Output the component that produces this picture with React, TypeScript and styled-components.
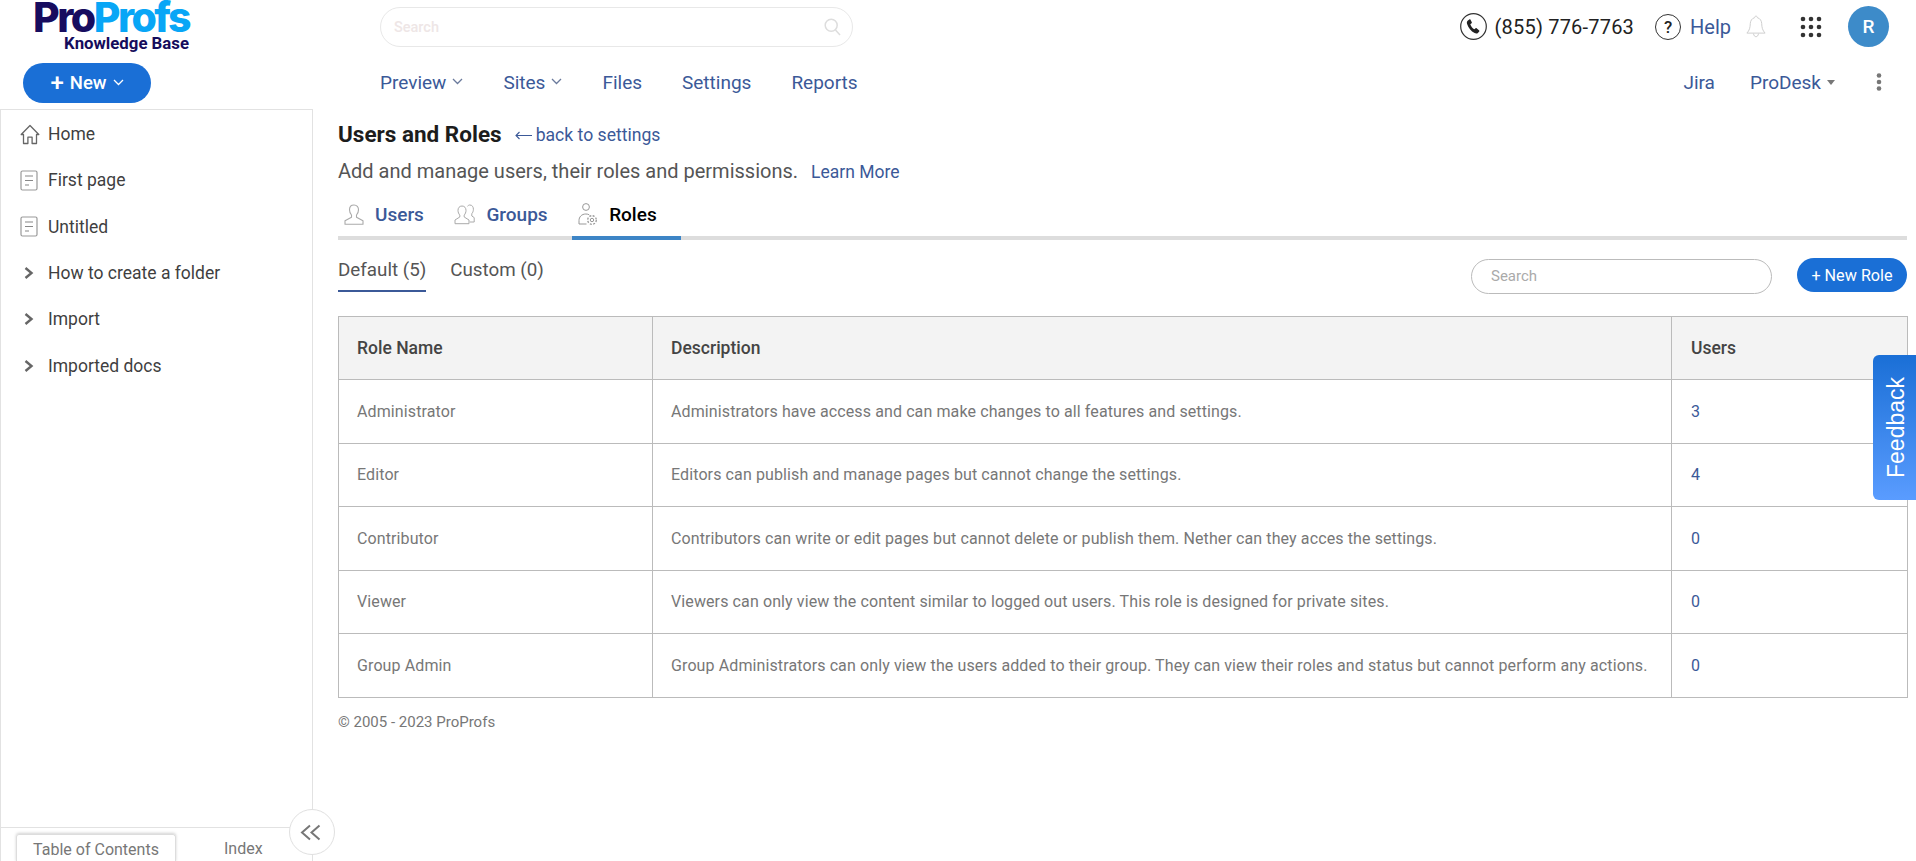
import React from "react";
import styled, { createGlobalStyle } from "styled-components";

const GlobalStyle = createGlobalStyle`
  html, body {
    margin: 0;
    padding: 0;
    background: #fff;
    font-family: Roboto, "Liberation Sans", Arial, sans-serif;
    overflow: hidden;
  }
  * { box-sizing: border-box; }
`;

const NAVY = "#3b5998";

const ROLES = [
  { name: "Administrator", description: "Administrators have access and can make changes to all features and settings.", users: 3 },
  { name: "Editor", description: "Editors can publish and manage pages but cannot change the settings.", users: 4 },
  { name: "Contributor", description: "Contributors can write or edit pages but cannot delete or publish them. Nether can they acces the settings.", users: 0 },
  { name: "Viewer", description: "Viewers can only view the content similar to logged out users. This role is designed for private sites.", users: 0 },
  { name: "Group Admin", description: "Group Administrators can only view the users added to their group. They can view their roles and status but cannot perform any actions.", users: 0 },
];

const TREE = [
  { label: "Home", kind: "home" },
  { label: "First page", kind: "page" },
  { label: "Untitled", kind: "page" },
  { label: "How to create a folder", kind: "folder" },
  { label: "Import", kind: "folder" },
  { label: "Imported docs", kind: "folder" },
];

const HomeIcon = () => (
  <svg width="20" height="21" viewBox="0 0 20 21" fill="none" stroke="#666" strokeWidth="1.3" strokeLinejoin="round">
    <path d="M10 1.5 1.2 10.5h2.3v9h4.4v-6.3h4.2v6.3h4.4v-9h2.3z" />
  </svg>
);

const PageIcon = () => (
  <svg width="18" height="21" viewBox="0 0 18 21" fill="none" stroke="#999" strokeWidth="1.2">
    <rect x="1" y="1" width="16" height="19" rx="1.5" />
    <path d="M5 6h8M5 10.5h8M5 15h4" stroke="#888" />
  </svg>
);

const FolderChevron = () => (
  <svg width="12" height="14" viewBox="0 0 12 14" fill="none" stroke="#666" strokeWidth="2.4">
    <path d="M2.500 2 8.500 7l-6 5" />
  </svg>
);

const Chevron = ({ color = "#6a7a9c", size = 11 }: { color?: string; size?: number }) => (
  <svg width={size} height={size * 0.64} viewBox="0 0 11 7" fill="none" stroke={color} strokeWidth="1.3">
    <path d="m1 1 4.500 4.500L10 1" />
  </svg>
);

const SearchGlyph = () => (
  <svg width="17" height="18" viewBox="0 0 17 18" fill="none" stroke="#ddd" strokeWidth="1.5">
    <circle cx="7.200" cy="7.200" r="6" />
    <path d="m11.500 12 4.500 5" />
  </svg>
);

const PhoneIcon = () => (
  <svg width="27" height="27" viewBox="0 0 27 27" fill="none">
    <circle cx="13.500" cy="13.500" r="12.800" stroke="#333" strokeWidth="1.200" />
    <path d="M9.300 6.400 7.600 7.700c-.8.700-.9 2-.5 3.300 1.200 3.800 4 7.300 7.500 9 1.200.6 2.500.6 3.300-.1l1.300-1.400c.3-.3.3-.8 0-1.100l-2.600-2.200c-.3-.3-.7-.2-1 0l-1.200 1.100c-1.900-1-3.400-3-4.100-5.100l1.300-1c.3-.3.4-.7.2-1L10.400 6.600c-.3-.4-.8-.5-1.100-.2z" fill="#222" />
  </svg>
);

const BellIcon = () => (
  <svg width="20" height="23" viewBox="0 0 20 23" fill="none" stroke="#cfcfcf" strokeWidth="1">
    <path d="M10 1.200c-.9 0-1.400.6-1.400 1.500C5.700 3.400 4.400 6 4.300 8.600c-.1 3.700-.8 6.900-3.400 9.500h18.200c-2.600-2.600-3.300-5.800-3.400-9.500-.1-2.600-1.400-5.200-4.300-5.900 0-.9-.5-1.500-1.400-1.500z" />
    <path d="M7.500 18.600c.3 2.100 1.300 3.100 2.500 3.100s2.200-1 2.500-3.100" />
  </svg>
);

const GridIcon = () => (
  <svg width="22" height="22" viewBox="0 0 22 22" fill="#333">
    {[3, 11, 19].map((y) =>
      [3, 11, 19].map((x) => <circle key={`${x}-${y}`} cx={x} cy={y} r="2.300" />)
    )}
  </svg>
);

const MoreIcon = () => (
  <svg width="6" height="18" viewBox="0 0 6 18" fill="#777">
    <circle cx="3" cy="2.500" r="2.300" />
    <circle cx="3" cy="9" r="2.300" />
    <circle cx="3" cy="15.500" r="2.300" />
  </svg>
);

const UserIcon = () => (
  <svg width="20" height="21" viewBox="0 0 20 21" fill="none" stroke="#aaa" strokeWidth="1.100" strokeLinejoin="round">
    <path d="M10 1c-2.900 0-4.500 2.100-4.500 4.800 0 2.100.9 4 2 5.200v2.200L1 16.800v3.400h18v-3.400l-6.500-3.600V11c1.100-1.200 2-3.100 2-5.200C14.500 3.100 12.900 1 10 1z" />
  </svg>
);

const GroupIcon = () => (
  <svg width="21" height="21" viewBox="0 0 21 21" fill="none" stroke="#aaa" strokeWidth="1" strokeLinejoin="round">
    <path d="M13.500 2.200C14.500 1.300 15 1 15.800 1c2.400 0 3.600 1.900 3.600 4.300 0 1.800-.7 3.400-1.600 4.400V12l2.400 1.600v4.400h-4.400" />
    <path d="M8 2C5.400 2 4 4 4 6.400c0 1.900.8 3.600 1.800 4.700v1.900L1 16v3.700h14V16l-4.800-3v-1.900c1-1.100 1.800-2.800 1.800-4.700C12 4 10.600 2 8 2z" />
  </svg>
);

const RolesIcon = () => (
  <svg width="20" height="23" viewBox="0 0 20 23" fill="none" stroke="#999" strokeWidth="1">
    <circle cx="8" cy="4" r="3.400" />
    <path d="M1 21v-3.500c0-3.500 2.600-6.500 6.800-6.500 1.400 0 2.500.3 3.400.8M1 21h7.500" />
    <circle cx="14" cy="17" r="1.700" />
    <circle cx="14" cy="17" r="4.300" strokeDasharray="2 1.400" strokeWidth="1.300" />
  </svg>
);

const DoubleChevron = () => (
  <svg width="21" height="17" viewBox="0 0 21 17" fill="none" stroke="#777" strokeWidth="2">
    <path d="M10 1.500 2 8.500l8 7M19.500 1.500l-8 7 8 7" />
  </svg>
);

const BackArrowIcon = () => (
  <svg width="17" height="9" viewBox="0 0 17 9" fill="none" stroke={NAVY} strokeWidth="1.100">
    <path d="M17 4.500H1M4.500 1 1 4.500 4.500 8" />
  </svg>
);

export default function App() {
  return (
    <>
      <GlobalStyle />
      <Shell>
        <Header>
          <TopRow>
            <LogoSlot>
              <Logo>
                <LogoMark>
                  <LogoPro>Pro</LogoPro>
                  <LogoProfs>Profs</LogoProfs>
                </LogoMark>
                <LogoSub>Knowledge Base</LogoSub>
              </Logo>
            </LogoSlot>
            <GlobalSearch>
              <GlobalSearchText>Search</GlobalSearchText>
              <SearchGlyph />
            </GlobalSearch>
            <TopActions>
              <PhoneIcon />
              <PhoneNumber>(855) 776-7763</PhoneNumber>
              <HelpCircle>?</HelpCircle>
              <HelpLink>Help</HelpLink>
              <BellSlot>
                <BellIcon />
              </BellSlot>
              <GridSlot>
                <GridIcon />
              </GridSlot>
              <Avatar>R</Avatar>
            </TopActions>
          </TopRow>
          <NavRow>
            <NewSlot>
              <NewButton>
                <NewPlus>+</NewPlus>
                New
                <Chevron color="#fff" size={11} />
              </NewButton>
            </NewSlot>
            <Nav>
              <NavItem>
                Preview <Chevron />
              </NavItem>
              <NavItem>
                Sites <Chevron />
              </NavItem>
              <NavItem>Files</NavItem>
              <NavItem>Settings</NavItem>
              <NavItem>Reports</NavItem>
            </Nav>
            <NavRight>
              <NavItem>Jira</NavItem>
              <NavItem>
                ProDesk <Caret />
              </NavItem>
              <MoreSlot>
                <MoreIcon />
              </MoreSlot>
            </NavRight>
          </NavRow>
        </Header>
        <Body>
          <Sidebar>
            <Tree>
              {TREE.map((item) => (
                <TreeRow key={item.label}>
                  <TreeIcon $folder={item.kind === "folder"}>
                    {item.kind === "home" && <HomeIcon />}
                    {item.kind === "page" && <PageIcon />}
                    {item.kind === "folder" && <FolderChevron />}
                  </TreeIcon>
                  {item.label}
                </TreeRow>
              ))}
            </Tree>
            <SideFooter>
              <SideTab $active>Table of Contents</SideTab>
              <SideTab>Index</SideTab>
            </SideFooter>
            <Collapse>
              <DoubleChevron />
            </Collapse>
          </Sidebar>
          <Main>
            <TitleRow>
              <Title>Users and Roles</Title>
              <BackLink>
                <BackArrowIcon />
                back to settings
              </BackLink>
            </TitleRow>
            <SubtitleRow>
              <Subtitle>Add and manage users, their roles and permissions.</Subtitle>
              <LearnMore>Learn More</LearnMore>
            </SubtitleRow>
            <TabsBar>
              <MainTab>
                <UserIcon />
                Users
              </MainTab>
              <MainTab>
                <GroupIcon />
                Groups
              </MainTab>
              <MainTab $active>
                <RolesIcon />
                Roles
              </MainTab>
            </TabsBar>
            <FilterRow>
              <FilterTabs>
                <FilterTab $active>Default (5)</FilterTab>
                <FilterTab>Custom (0)</FilterTab>
              </FilterTabs>
              <FilterActions>
                <RoleSearch>Search</RoleSearch>
                <NewRole>+ New Role</NewRole>
              </FilterActions>
            </FilterRow>
            <RolesTable>
              <colgroup>
                <col width="314" />
                <col width="1019" />
                <col width="236" />
              </colgroup>
              <thead>
                <tr>
                  <Th>Role Name</Th>
                  <Th>Description</Th>
                  <Th>Users</Th>
                </tr>
              </thead>
              <tbody>
                {ROLES.map((role) => (
                  <tr key={role.name}>
                    <Td>{role.name}</Td>
                    <Td>{role.description}</Td>
                    <CountCell>{role.users}</CountCell>
                  </tr>
                ))}
              </tbody>
            </RolesTable>
            <Copyright>© 2005 - 2023 ProProfs</Copyright>
          </Main>
        </Body>
        <Feedback>Feedback</Feedback>
      </Shell>
    </>
  );
}

const Shell = styled.div`
  width: 1916px;
  height: 861px;
  display: flex;
  flex-direction: column;
  overflow: hidden;
  position: relative;
`;

const Header = styled.header`
  height: 109px;
  display: flex;
  flex-direction: column;
`;

const TopRow = styled.div`
  height: 54px;
  display: flex;
  align-items: flex-start;
`;

const LogoSlot = styled.div`
  width: 380px;
  padding-left: 35px;
`;

const Logo = styled.div`
  width: 154px;
  display: flex;
  flex-direction: column;
  align-items: flex-end;
`;

const LogoMark = styled.div`
  font-family: Inter, Roboto, sans-serif;
  font-weight: 800;
  font-size: 41px;
  line-height: 34px;
  letter-spacing: -2.500px;
  white-space: nowrap;
`;

const LogoPro = styled.span`
  color: #170c5f;
`;

const LogoProfs = styled.span`
  color: #08a6f6;
`;

const LogoSub = styled.div`
  color: #150c5c;
  font-weight: 700;
  font-size: 16.800px;
  line-height: 18px;
  white-space: nowrap;
`;

const GlobalSearch = styled.div`
  width: 473px;
  height: 40px;
  margin-top: 7px;
  padding: 0 11px 0 13px;
  border: 1px solid #e8e8e8;
  border-radius: 20px;
  display: flex;
  align-items: center;
  justify-content: space-between;
`;

const GlobalSearchText = styled.span`
  font-size: 14.500px;
  font-weight: 500;
  color: #eee6e6;
`;

const TopActions = styled.div`
  margin-left: auto;
  height: 41px;
  margin-top: 6px;
  padding-right: 27px;
  display: flex;
  align-items: center;
`;

const PhoneNumber = styled.span`
  margin-left: 8px;
  font-size: 20px;
  color: #222;
  letter-spacing: 0.2px;
`;

const HelpCircle = styled.span`
  margin-left: 21px;
  width: 26px;
  height: 26px;
  border: 1.500px solid #333;
  border-radius: 50%;
  display: flex;
  align-items: center;
  justify-content: center;
  font-size: 17px;
  font-weight: 500;
  color: #222;
`;

const HelpLink = styled.span`
  margin-left: 9px;
  font-size: 20px;
  color: ${NAVY};
`;

const BellSlot = styled.span`
  margin-left: 15px;
  display: flex;
`;

const GridSlot = styled.span`
  margin-left: 34px;
  display: flex;
`;

const Avatar = styled.span`
  margin-left: 26px;
  width: 41px;
  height: 41px;
  border-radius: 50%;
  background: #3d8bc9;
  color: #fff;
  display: flex;
  align-items: center;
  justify-content: center;
  font-size: 19px;
  font-weight: 500;
`;

const NavRow = styled.div`
  height: 55px;
  display: flex;
  align-items: flex-start;
`;

const NewSlot = styled.div`
  width: 380px;
  padding: 9px 0 0 23px;
`;

const NewButton = styled.button`
  width: 128px;
  height: 40px;
  border: 0;
  border-radius: 20px;
  background: #1a6fd6;
  color: #fff;
  font-family: inherit;
  font-size: 18.500px;
  font-weight: 500;
  display: flex;
  align-items: center;
  justify-content: center;
  gap: 6px;
`;

const NewPlus = styled.span`
  font-size: 24px;
  line-height: 24px;
`;

const Nav = styled.nav`
  height: 56px;
  display: flex;
  align-items: center;
  gap: 40px;
`;

const NavItem = styled.span`
  font-size: 19px;
  color: ${NAVY};
  display: flex;
  align-items: center;
  gap: 6px;
  white-space: nowrap;
`;

const NavRight = styled.div`
  margin-left: auto;
  height: 56px;
  padding-right: 34px;
  display: flex;
  align-items: center;
  gap: 35px;
`;

const Caret = styled.span`
  width: 0;
  height: 0;
  border-left: 4.500px solid transparent;
  border-right: 4.500px solid transparent;
  border-top: 5px solid #777;
`;

const MoreSlot = styled.span`
  margin-left: 6px;
  display: flex;
`;

const Body = styled.div`
  flex: 1;
  display: flex;
  min-height: 0;
`;

const Sidebar = styled.aside`
  position: relative;
  width: 313px;
  flex: none;
  border: 1px solid #e2e2e2;
  border-bottom: 0;
  display: flex;
  flex-direction: column;
`;

const Tree = styled.div`
  flex: 1;
  padding-top: 1px;
`;

const TreeRow = styled.div`
  height: 46.300px;
  display: flex;
  align-items: center;
  font-size: 17.500px;
  color: #3f3f3f;
`;

const TreeIcon = styled.span<{ $folder?: boolean }>`
  width: 47px;
  padding-left: ${(p) => (p.$folder ? "22px" : "19px")};
  display: flex;
  flex: none;
  align-items: center;
`;

const SideFooter = styled.div`
  height: 34px;
  border-top: 1px solid #e2e2e2;
  padding: 6px 0 0 15px;
  display: flex;
`;

const SideTab = styled.div<{ $active?: boolean }>`
  width: ${(p) => (p.$active ? "160px" : "auto")};
  margin-left: ${(p) => (p.$active ? "0" : "48px")};
  height: 28px;
  text-align: center;
  font-size: 16px;
  line-height: 30px;
  color: #777;
  border-radius: 3px 3px 0 0;
  ${(p) => p.$active && "border: 1px solid #ddd; border-bottom: 0; box-shadow: 0 -1px 3px rgba(0,0,0,.18);"}
`;

const Collapse = styled.div`
  position: absolute;
  right: -23px;
  bottom: 6px;
  width: 46px;
  height: 46px;
  padding-right: 3px;
  border: 1px solid #e0e0e0;
  border-radius: 50%;
  background: #fff;
  display: flex;
  align-items: center;
  justify-content: center;
`;

const Main = styled.main`
  flex: 1;
  min-width: 0;
  padding: 0 9px 0 25px;
`;

const TitleRow = styled.div`
  height: 50px;
  display: flex;
  align-items: center;
  gap: 13px;
`;

const Title = styled.h1`
  margin: 0;
  font-size: 22.500px;
  font-weight: 700;
  color: #1c1c1c;
`;

const BackLink = styled.a`
  padding-top: 2px;
  font-size: 17.600px;
  color: ${NAVY};
  display: flex;
  align-items: center;
  gap: 4px;
`;

const SubtitleRow = styled.div`
  height: 24px;
  display: flex;
  align-items: center;
  gap: 13px;
`;

const Subtitle = styled.span`
  font-size: 20px;
  color: #555;
`;

const LearnMore = styled.a`
  font-size: 17.500px;
  color: ${NAVY};
  padding-top: 2px;
`;

const TabsBar = styled.div`
  height: 57px;
  padding-top: 7px;
  border-bottom: 4px solid #ddd;
  display: flex;
`;

const MainTab = styled.div<{ $active?: boolean }>`
  height: 50px;
  padding: 0 24.500px 2px 6px;
  display: flex;
  align-items: center;
  gap: 11px;
  font-size: 19px;
  font-weight: 500;
  color: ${(p) => (p.$active ? "#000" : NAVY)};
  ${(p) => p.$active && "border-bottom: 4px solid #3d85c6; padding-top: 2px; padding-bottom: 0;"}
`;

const FilterRow = styled.div`
  height: 76px;
  display: flex;
  justify-content: space-between;
`;

const FilterTabs = styled.div`
  display: flex;
  gap: 24px;
  align-items: flex-start;
`;

const FilterTab = styled.div<{ $active?: boolean }>`
  height: 52px;
  padding-top: 19px;
  font-size: 18.800px;
  color: #555;
  ${(p) => p.$active && `border-bottom: 2px solid ${NAVY};`}
`;

const FilterActions = styled.div`
  display: flex;
  align-items: flex-start;
  gap: 25px;
  padding-top: 18px;
`;

const RoleSearch = styled.div`
  width: 301px;
  height: 35px;
  margin-top: 1px;
  padding-left: 19px;
  border: 1px solid #bbb;
  border-radius: 18px;
  font-size: 15px;
  line-height: 33px;
  color: #aaa;
`;

const NewRole = styled.button`
  width: 110px;
  height: 34px;
  border: 0;
  border-radius: 17px;
  background: #1a6fd6;
  color: #fff;
  font-family: inherit;
  font-size: 16.200px;
`;

const RolesTable = styled.table`
  width: 1570px;
  table-layout: fixed;
  border-collapse: collapse;
`;

const Th = styled.th`
  height: 63px;
  padding: 0 0 0 18px;
  text-align: left;
  font-size: 17.500px;
  font-weight: 500;
  color: #444;
  background: #f3f3f3;
  border: 1px solid #bbb;

  &:last-child {
    padding-left: 19px;
  }
`;

const Td = styled.td`
  height: 63.500px;
  padding: 0 0 0 18px;
  font-size: 16px;
  letter-spacing: 0.11px;
  color: #777;
  border: 1px solid #bbb;
  white-space: nowrap;
`;

const CountCell = styled(Td)`
  padding-left: 19px;
  color: ${NAVY};
`;

const Copyright = styled.div`
  margin-top: 15px;
  font-size: 15px;
  color: #777;
`;

const Feedback = styled.div`
  position: absolute;
  top: 355px;
  right: 0;
  width: 43px;
  height: 145px;
  padding-right: 4px;
  border-radius: 0 6px 6px 0;
  background: linear-gradient(#5a9cff, #1a6fd6);
  color: #fff;
  font-family: "Liberation Sans", Arial, sans-serif;
  font-size: 23px;
  writing-mode: vertical-rl;
  transform: rotate(180deg);
  display: flex;
  align-items: center;
  justify-content: center;
`;
